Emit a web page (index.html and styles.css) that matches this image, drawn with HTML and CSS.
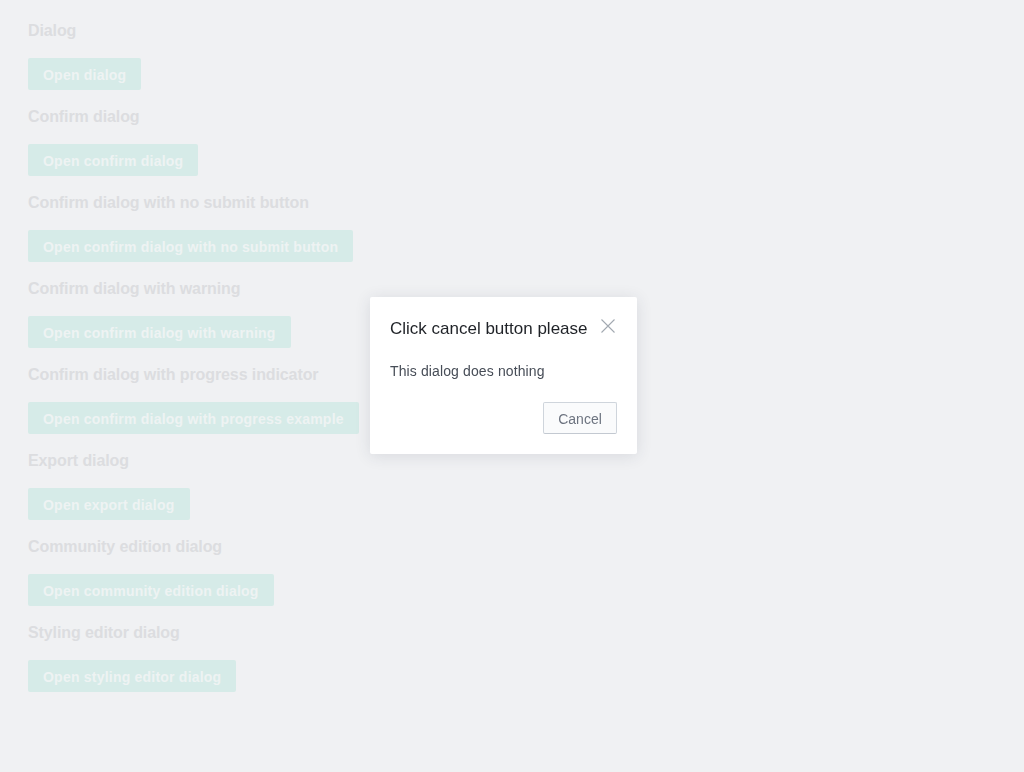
FILE: index.html
```html
<!DOCTYPE html>
<html>
<head>
<meta charset="utf-8">
<link rel="stylesheet" href="styles.css">
</head>
<body>
<main class="page">
  <section class="demo">
    <h2 class="demo-title">Dialog</h2>
    <button class="demo-btn">Open dialog</button>
  </section>
  <section class="demo">
    <h2 class="demo-title">Confirm dialog</h2>
    <button class="demo-btn">Open confirm dialog</button>
  </section>
  <section class="demo">
    <h2 class="demo-title">Confirm dialog with no submit button</h2>
    <button class="demo-btn">Open confirm dialog with no submit button</button>
  </section>
  <section class="demo">
    <h2 class="demo-title">Confirm dialog with warning</h2>
    <button class="demo-btn">Open confirm dialog with warning</button>
  </section>
  <section class="demo">
    <h2 class="demo-title">Confirm dialog with progress indicator</h2>
    <button class="demo-btn">Open confirm dialog with progress example</button>
  </section>
  <section class="demo">
    <h2 class="demo-title">Export dialog</h2>
    <button class="demo-btn">Open export dialog</button>
  </section>
  <section class="demo">
    <h2 class="demo-title">Community edition dialog</h2>
    <button class="demo-btn">Open community edition dialog</button>
  </section>
  <section class="demo">
    <h2 class="demo-title">Styling editor dialog</h2>
    <button class="demo-btn">Open styling editor dialog</button>
  </section>
</main>

<div class="overlay">
  <div class="dialog" role="dialog">
    <div class="dialog-header">
      <h3 class="dialog-title">Click cancel button please</h3>
      <button class="dialog-close" aria-label="Close">
        <svg width="14" height="14" viewBox="0 0 14 14"><path d="M0.5 0.5 L13.5 13.5 M13.5 0.5 L0.5 13.5" stroke="#a2a9b1" stroke-width="1.1" fill="none"/></svg>
      </button>
    </div>
    <p class="dialog-body">This dialog does nothing</p>
    <div class="dialog-footer">
      <button class="dialog-cancel">Cancel</button>
    </div>
  </div>
</div>
</body>
</html>
```

FILE: styles.css
```css
html, body {
  margin: 0;
  padding: 0;
  height: 100%;
}
body {
  background: #f0f1f3;
  font-family: "Liberation Sans", Arial, sans-serif;
}
.page {
  padding: 21px 28px 20px;
  display: flex;
  flex-direction: column;
  align-items: flex-start;
}
.demo {
  display: flex;
  flex-direction: column;
  align-items: flex-start;
  margin-bottom: 17px;
}
.demo-title {
  margin: 0 0 17px;
  font-size: 16px;
  line-height: 20px;
  font-weight: bold;
  letter-spacing: -0.1px;
  color: #dcdde0;
}
.demo-btn {
  height: 32px;
  padding: 2px 15px 0;
  border: none;
  border-radius: 2px;
  background: #d6ebe8;
  color: #eef3f3;
  font-family: "Liberation Sans", Arial, sans-serif;
  font-size: 14px;
  font-weight: bold;
  letter-spacing: 0.22px;
}
.overlay {
  position: fixed;
  inset: 0;
  display: flex;
  align-items: center;
  justify-content: center;
  padding-right: 17px;
}
.dialog {
  width: 267px;
  box-sizing: border-box;
  background: #fff;
  border-radius: 2px;
  padding: 20px 20px 20px;
  box-shadow: 0 2px 16px rgba(40, 50, 70, 0.12);
  margin-top: -21px;
}
.dialog-header {
  display: flex;
  align-items: flex-start;
  justify-content: space-between;
}
.dialog-title {
  margin: 0;
  font-size: 17px;
  line-height: 24px;
  font-weight: normal;
  color: #1f2227;
}
.dialog-close {
  border: none;
  background: none;
  padding: 0;
  margin-top: 2px;
  margin-right: 2px;
  width: 14px;
  height: 14px;
  display: flex;
}
.dialog-body {
  margin: 21px 0 22px;
  font-size: 14px;
  line-height: 18px;
  letter-spacing: 0.12px;
  color: #474d57;
}
.dialog-footer {
  display: flex;
  justify-content: flex-end;
}
.dialog-cancel {
  height: 32px;
  width: 74px;
  border: 1px solid #cfd5dc;
  border-bottom-color: #c3c9d1;
  border-radius: 2px;
  background: #fafbfc;
  color: #6d7480;
  font-family: "Liberation Sans", Arial, sans-serif;
  font-size: 14px;
  padding: 2px 0 0;
}
```
